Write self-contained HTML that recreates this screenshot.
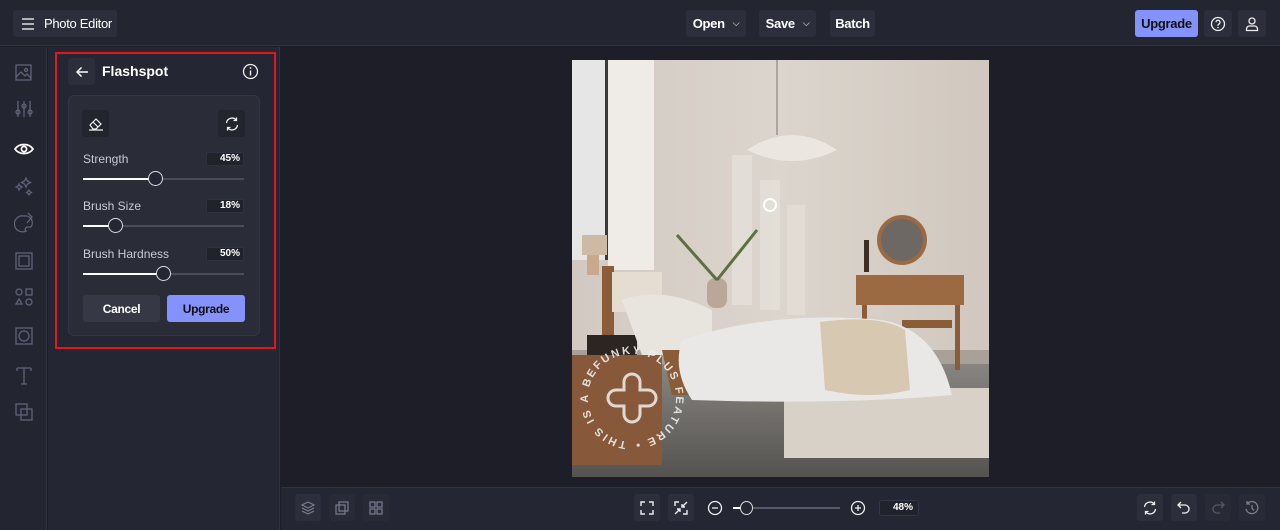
<!DOCTYPE html>
<html><head><meta charset="utf-8"><style>
*{box-sizing:border-box;margin:0;padding:0}
body{width:1280px;height:530px;overflow:hidden;background:#1d1e28;font-family:"Liberation Sans",sans-serif;color:#fff;position:relative}
.abs{position:absolute}
.top{left:0;top:0;width:1280px;height:46px;background:#232531;border-bottom:1px solid #30323f}
.btn{position:absolute;background:#2c2e3b;border-radius:3px;font-size:13px;font-weight:bold;color:#fff;display:flex;align-items:center;justify-content:center;letter-spacing:-0.3px}
.side{left:0;top:47px;width:47px;height:483px;background:#232531;border-right:1px solid #30323f}
.panel{left:48px;top:47px;width:232px;height:483px;background:#242633;border-right:1px solid #30323f}
.bottom{left:281px;top:487px;width:999px;height:43px;background:#242633;border-top:1px solid #30323f}
.ico{position:absolute}
.lbl{position:absolute;font-size:12px;color:#c9cad3}
.val{position:absolute;width:38px;height:14px;background:#20222c;border:1px solid #2f3140;border-radius:2px;font-size:10px;font-weight:bold;text-align:right;padding-right:3px;line-height:12px}
.track{position:absolute;height:2px;background:#4a4c5a;left:83px;width:161px}
.fill{position:absolute;height:2px;background:#fff;left:0;top:0}
.knob{position:absolute;width:15px;height:15px;border-radius:50%;background:#242633;border:1.5px solid #ddd;top:-7px}
</style></head><body>
<div class="abs top"></div>
<div class="btn" style="left:13px;top:10px;width:104px;height:27px;justify-content:flex-start;padding-left:8px">
<svg width="14" height="12" viewBox="0 0 14 12"><path d="M1 1h12M1 6h12M1 11h12" stroke="#ddd" stroke-width="1.5"/></svg><span style="margin-left:9px;font-weight:normal">Photo Editor</span></div>
<div class="btn" style="left:686px;top:10px;width:60px;height:27px">Open <span style="font-size:9px;margin-left:8px;color:#aaa">⌵</span></div>
<div class="btn" style="left:759px;top:10px;width:57px;height:27px">Save <span style="font-size:9px;margin-left:8px;color:#aaa">⌵</span></div>
<div class="btn" style="left:830px;top:10px;width:45px;height:27px">Batch</div>
<div class="btn" style="left:1135px;top:10px;width:63px;height:27px;background:#8493fb;color:#111">Upgrade</div>
<div class="btn" style="left:1204px;top:10px;width:28px;height:27px"><svg width="16" height="16" viewBox="0 0 16 16"><circle cx="8" cy="8" r="6.5" fill="none" stroke="#eee" stroke-width="1.3"/><path d="M6 6.3a2 2 0 1 1 2.5 1.9c-.4.2-.5.5-.5 1v.6" fill="none" stroke="#eee" stroke-width="1.3"/><circle cx="8" cy="11.5" r=".8" fill="#eee"/></svg></div>
<div class="btn" style="left:1238px;top:10px;width:28px;height:27px"><svg width="16" height="16" viewBox="0 0 16 16"><circle cx="8" cy="5" r="3" fill="none" stroke="#eee" stroke-width="1.3"/><path d="M2.5 14.5v-1.5a3 3 0 0 1 3-3h5a3 3 0 0 1 3 3v1.5z" fill="none" stroke="#eee" stroke-width="1.3"/></svg></div>

<div class="abs side"></div>
<svg class="ico" style="left:14px;top:62px" width="20" height="360" viewBox="0 0 20 360" fill="none" stroke="#5f6278" stroke-width="1.3">
<rect x="2" y="3" width="15" height="15"/><path d="M2 15l5-5 4 4 2-2 4 4"/><circle cx="12" cy="8" r="1.5"/>
<path d="M4 39v16M10 39v16M16 39v16"/><circle cx="4" cy="50" r="2"/><circle cx="10" cy="44" r="2"/><circle cx="16" cy="50" r="2"/>
<path d="M1 87c4-6 14-6 18 0c-4 6-14 6-18 0z" stroke="#fff" stroke-width="1.7"/><circle cx="10" cy="87" r="2.6" stroke="#fff" stroke-width="1.7"/>
<path d="M12 116l1.5 3 3 1.5-3 1.5-1.5 3-1.5-3-3-1.5 3-1.5zM5 122l1 2 2 1-2 1-1 2-1-2-2-1 2-1zM15 128l1 1.5 1.5 1-1.5 1-1 1.5-1-1.5-1.5-1 1.5-1z"/>
<path d="M10 154a8 8 0 1 0 2 15c-2-2 0-4 2-4h3a7 7 0 0 0-7-11z"/><path d="M14 151l4 4-5 6"/>
<rect x="2" y="191" width="16" height="16"/><rect x="5" y="194" width="10" height="10"/>
<circle cx="5" cy="230" r="3"/><rect x="12" y="227" width="6" height="6"/><path d="M5 237l3 5H2z"/><circle cx="15" cy="240" r="3"/>
<rect x="2" y="266" width="16" height="16"/><circle cx="10" cy="274" r="5"/>
<path d="M3 306h14M10 306v16M7 322h6M3 306v3M17 306v3"/>
<rect x="2" y="342" width="11" height="11"/><rect x="7" y="347" width="11" height="11"/>
</svg>

<div class="abs panel"></div>
<div class="abs" style="left:55px;top:52px;width:221px;height:297px;border:2px solid #e3161c"></div>
<div class="btn" style="left:68px;top:58px;width:27px;height:27px"><svg width="14" height="12" viewBox="0 0 14 12"><path d="M13 6H2M6.5 1.5L2 6l4.5 4.5" fill="none" stroke="#fff" stroke-width="1.5"/></svg></div>
<div class="abs" style="left:102px;top:63px;font-size:14px;font-weight:bold">Flashspot</div>
<svg class="ico" style="left:242px;top:63px" width="17" height="17" viewBox="0 0 17 17"><circle cx="8.5" cy="8.5" r="7" fill="none" stroke="#eee" stroke-width="1.3"/><path d="M8.5 7.5v5" stroke="#eee" stroke-width="1.4"/><circle cx="8.5" cy="5" r=".9" fill="#eee"/></svg>
<div class="abs" style="left:68px;top:95px;width:192px;height:241px;background:#2a2c38;border:1px solid #33354a;border-radius:6px"></div>
<div class="btn" style="left:82px;top:110px;width:27px;height:27px;background:#22242e"><svg width="16" height="14" viewBox="0 0 16 14"><path d="M2 8l6-6 5 5-5 5H5zM5 5l5 5M1 13h14" fill="none" stroke="#eee" stroke-width="1.2"/></svg></div>
<div class="btn" style="left:218px;top:110px;width:27px;height:27px;background:#22242e"><svg width="16" height="16" viewBox="0 0 16 16" fill="none" stroke="#eee" stroke-width="1.3"><path d="M2.5 7a5.5 5.5 0 0 1 10-2.5M13.5 9a5.5 5.5 0 0 1-10 2.5"/><path d="M12.5 1.5v3h-3M3.5 14.5v-3h3"/></svg></div>
<div class="lbl" style="left:83px;top:152px">Strength</div><div class="val" style="left:206px;top:152px">45%</div>
<div class="track" style="top:178px"><div class="fill" style="width:73px"></div><div class="knob" style="left:65px"></div></div>
<div class="lbl" style="left:83px;top:199px">Brush Size</div><div class="val" style="left:206px;top:199px">18%</div>
<div class="track" style="top:225px"><div class="fill" style="width:33px"></div><div class="knob" style="left:25px"></div></div>
<div class="lbl" style="left:83px;top:247px">Brush Hardness</div><div class="val" style="left:206px;top:247px">50%</div>
<div class="track" style="top:273px"><div class="fill" style="width:81px"></div><div class="knob" style="left:73px"></div></div>
<div class="btn" style="left:83px;top:295px;width:77px;height:27px;background:#363846;font-size:12px">Cancel</div>
<div class="btn" style="left:167px;top:295px;width:78px;height:27px;background:#8493fb;color:#111;font-size:12px">Upgrade</div>

<svg class="abs" style="left:572px;top:60px" width="417" height="417" viewBox="0 0 417 417">
<defs><linearGradient id="w" x1="0" x2="1"><stop offset="0" stop-color="#d2cac2"/><stop offset=".5" stop-color="#dcd5cd"/><stop offset="1" stop-color="#d0c8bf"/></linearGradient>
<linearGradient id="f" x1="0" y1="0" x2="0" y2="1"><stop offset="0" stop-color="#8a8783"/><stop offset="1" stop-color="#55534f"/></linearGradient></defs>
<rect width="417" height="417" fill="url(#w)"/>
<rect x="0" y="0" width="36" height="200" fill="#e6e6e7"/><rect x="36" y="0" width="46" height="210" fill="#efebe6"/><rect x="33" y="0" width="3" height="200" fill="#3a3a3a"/>
<rect x="160" y="95" width="20" height="150" fill="#e6e1da" opacity=".7"/><rect x="188" y="120" width="20" height="130" fill="#e6e1da" opacity=".7"/><rect x="215" y="145" width="18" height="110" fill="#e6e1da" opacity=".6"/>
<path d="M205 0v75" stroke="#777"/><path d="M175 90q45-30 90 0q-45 22-90 0z" fill="#ebe6df"/>
<circle cx="198" cy="145" r="6" fill="none" stroke="#fff" stroke-width="2"/>
<rect x="0" y="300" width="417" height="117" fill="url(#f)"/><rect x="0" y="290" width="417" height="14" fill="#a7a19a"/>
<rect x="212" y="328" width="205" height="70" fill="#d7d1c7"/>
<circle cx="330" cy="180" r="23" fill="#6e6864" stroke="#9b6a42" stroke-width="4"/>
<rect x="284" y="215" width="108" height="30" fill="#9b6a42"/><rect x="290" y="245" width="5" height="60" fill="#8a5c38"/><rect x="383" y="245" width="5" height="65" fill="#8a5c38"/>
<rect x="330" y="260" width="50" height="8" fill="#8a5c38"/><rect x="292" y="180" width="5" height="32" fill="#3e2e26"/>
<rect x="135" y="218" width="20" height="30" rx="8" fill="#b9a898"/><path d="M145 220l-40-45M145 220l40-50" stroke="#5c7040" stroke-width="3"/>
<rect x="30" y="206" width="12" height="140" fill="#8a5c38"/><rect x="40" y="212" width="50" height="40" fill="#e6ddd2"/>
<rect x="0" y="295" width="90" height="110" fill="#87593a"/><rect x="15" y="275" width="50" height="20" fill="#2c2622"/>
<path d="M50 240q40-15 90 10l0 45-70 0z" fill="#e8e4de"/>
<path d="M90 290h260l10 45H100z" fill="#8a5c38"/>
<path d="M110 280q90-30 200-20q55 10 70 75q-110 10-260 5q-20-30-10-60z" fill="#e9e8e6"/>
<path d="M248 262q60-8 85 8l5 60q-40 10-85 0z" fill="#d7c8b2"/>
<rect x="10" y="175" width="25" height="20" fill="#cdb9a4"/><rect x="15" y="195" width="12" height="20" fill="#c8a98d"/>
<g fill="none" stroke="#eee" stroke-width="3" opacity=".85"><path d="M52 322a8 8 0 0 1 16 0v8h8a8 8 0 0 1 0 16h-8v8a8 8 0 0 1-16 0v-8h-8a8 8 0 0 1 0-16h8z"/></g>
<path id="c" d="M60 382a44 44 0 1 1 0-88a44 44 0 1 1 0 88" fill="none"/>
<text font-size="11" font-weight="bold" fill="#eee" letter-spacing="2.2" opacity=".9"><textPath href="#c" startOffset="2%">THIS IS A BEFUNKY PLUS FEATURE •</textPath></text>
</svg>

<div class="abs bottom"></div>
<div class="btn" style="left:295px;top:494px;width:26px;height:27px"><svg width="16" height="16" viewBox="0 0 16 16" fill="none" stroke="#7a7d90" stroke-width="1.2"><path d="M8 2l6 3-6 3-6-3zM2 8l6 3 6-3M2 11l6 3 6-3"/></svg></div>
<div class="btn" style="left:329px;top:494px;width:26px;height:27px;background:#282a36"><svg width="16" height="16" viewBox="0 0 16 16" fill="none" stroke="#7a7d90" stroke-width="1.2"><rect x="2" y="5" width="9" height="9"/><rect x="5" y="2" width="9" height="9"/></svg></div>
<div class="btn" style="left:363px;top:494px;width:26px;height:27px;background:#282a36"><svg width="14" height="14" viewBox="0 0 14 14" fill="none" stroke="#7a7d90" stroke-width="1.2"><rect x="1" y="1" width="5" height="5"/><rect x="8" y="1" width="5" height="5"/><rect x="1" y="8" width="5" height="5"/><rect x="8" y="8" width="5" height="5"/></svg></div>
<div class="btn" style="left:634px;top:494px;width:26px;height:27px"><svg width="16" height="16" viewBox="0 0 16 16" fill="none" stroke="#eee" stroke-width="1.4"><path d="M2 6V2h4M10 2h4v4M14 10v4h-4M6 14H2v-4"/></svg></div>
<div class="btn" style="left:668px;top:494px;width:26px;height:27px"><svg width="16" height="16" viewBox="0 0 16 16" fill="none" stroke="#eee" stroke-width="1.4"><path d="M2 6V2h4M14 2l-5 5M9 4v3h3M14 10v4h-4M2 14l5-5M4 9h3v3"/></svg></div>
<svg class="ico" style="left:707px;top:500px" width="16" height="16" viewBox="0 0 16 16"><circle cx="8" cy="8" r="6.5" fill="none" stroke="#eee" stroke-width="1.3"/><path d="M5 8h6" stroke="#eee" stroke-width="1.3"/></svg>
<div class="abs" style="left:733px;top:507px;width:107px;height:2px;background:#555868"></div>
<div class="abs" style="left:733px;top:507px;width:10px;height:2px;background:#fff"></div>
<div class="abs" style="left:740px;top:501px;width:13px;height:14px;border-radius:50%;background:#242633;border:1.5px solid #ddd"></div>
<svg class="ico" style="left:850px;top:500px" width="16" height="16" viewBox="0 0 16 16"><circle cx="8" cy="8" r="6.5" fill="none" stroke="#eee" stroke-width="1.3"/><path d="M5 8h6M8 5v6" stroke="#eee" stroke-width="1.3"/></svg>
<div class="abs" style="left:879px;top:500px;width:40px;height:16px;border:1px solid #33354a;background:#20222c;border-radius:3px;font-size:10px;font-weight:bold;text-align:right;padding-right:5px;line-height:14px">48%</div>
<div class="btn" style="left:1137px;top:494px;width:26px;height:27px"><svg width="16" height="16" viewBox="0 0 16 16" fill="none" stroke="#eee" stroke-width="1.3"><path d="M2.5 7a5.5 5.5 0 0 1 10-2.5M13.5 9a5.5 5.5 0 0 1-10 2.5"/><path d="M12.5 1.5v3h-3M3.5 14.5v-3h3"/></svg></div>
<div class="btn" style="left:1171px;top:494px;width:26px;height:27px"><svg width="16" height="16" viewBox="0 0 16 16" fill="none" stroke="#eee" stroke-width="1.3"><path d="M5 2L2 5l3 3M2 5h7a4 4 0 0 1 0 8H6"/></svg></div>
<div class="btn" style="left:1205px;top:494px;width:26px;height:27px;background:#282a36"><svg width="16" height="16" viewBox="0 0 16 16" fill="none" stroke="#555868" stroke-width="1.3"><path d="M11 2l3 3-3 3M14 5H7a4 4 0 0 0 0 8h3"/></svg></div>
<div class="btn" style="left:1239px;top:494px;width:26px;height:27px;background:#282a36"><svg width="16" height="16" viewBox="0 0 16 16" fill="none" stroke="#7a7d90" stroke-width="1.3"><path d="M3 4a6 6 0 1 1-1 5M3 1v3h3M8 5v3.5l2 2"/></svg></div>
</body></html>
